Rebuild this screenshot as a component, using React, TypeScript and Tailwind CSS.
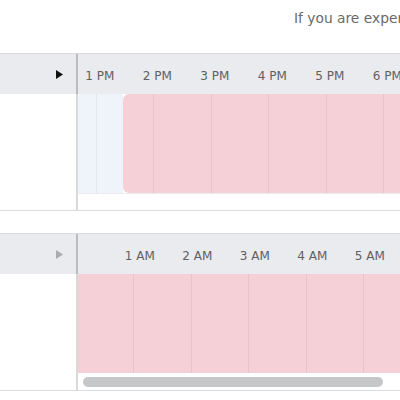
import React from "react";

const PANEL_FONT = "font-['DejaVu_Sans','Liberation_Sans',sans-serif]";

function Triangle({ color }: { color: string }) {
  return (
    <svg width="7" height="9" viewBox="0 0 7 9" className="block">
      <polygon points="0,0 7,4.5 0,9" fill={color} />
    </svg>
  );
}

function HeaderLabels({ labels, offsetClass }: { labels: string[]; offsetClass: string }) {
  return (
    <div className={`flex h-full items-center pt-[3px] whitespace-nowrap ${offsetClass}`}>
      {labels.map((l) => (
        <div key={l} className="w-[57.5px] shrink-0 text-center text-[12px] text-[#5f6062]">
          {l}
        </div>
      ))}
    </div>
  );
}

function PinkColumns({ first, count }: { first: number; count: number }) {
  return (
    <div className="flex h-full">
      <div className="shrink-0 h-full" style={{ width: first }} />
      {Array.from({ length: count }).map((_, i) => (
        <div key={i} className="w-[57.5px] shrink-0 h-full border-l border-[#ecc2c9]" />
      ))}
    </div>
  );
}

export default function App() {
  return (
    <div className={`w-[400px] h-[400px] bg-white overflow-hidden ${PANEL_FONT}`}>
      <div className="h-[53px] pl-[294px] pt-[8px] whitespace-nowrap overflow-hidden text-[13.8px] text-[#6a6a6a]">
        If you are experiencing problems with your schedule
      </div>

      {/* Panel 1 */}
      <div className="border-t border-b border-[#d9dbde] flex">
        <div className="w-[76px] shrink-0 flex flex-col">
          <div className="h-[40px] bg-[#e9ebee] flex items-center justify-end pr-[13px] pt-[1px]">
            <Triangle color="#111111" />
          </div>
          <div className="h-[99px] bg-white" />
          <div className="h-[17px] bg-white" />
        </div>
        <div className="w-[2px] shrink-0 flex flex-col">
          <div className="h-[40px] bg-[#b9bbbe]" />
          <div className="flex-1 bg-[#d9d9d9]" />
        </div>
        <div className="flex-1 overflow-hidden flex flex-col">
          <div className="h-[40px] bg-[#e9ebee] overflow-hidden">
            <HeaderLabels
              labels={["1 PM", "2 PM", "3 PM", "4 PM", "5 PM", "6 PM", "7 PM"]}
              offsetClass="ml-[-7px]"
            />
          </div>
          <div className="h-[99px] flex overflow-hidden">
            <div className="w-[45px] shrink-0 h-full bg-[#eef4f9] flex">
              <div className="w-[18px] shrink-0 h-full" />
              <div className="h-full border-l border-[#dfe7ef]" />
            </div>
            <div className="flex-1 h-full bg-[#f5d1d7] rounded-l-[6px] overflow-hidden">
              <PinkColumns first={30} count={6} />
            </div>
          </div>
          <div className="h-[17px] bg-white border-t border-[#ececec]" />
        </div>
      </div>

      <div className="h-[22px]" />

      {/* Panel 2 */}
      <div className="border-t border-b border-[#d9dbde] flex">
        <div className="w-[76px] shrink-0 flex flex-col">
          <div className="h-[40px] bg-[#e9ebee] flex items-center justify-end pr-[13px] pt-[1px]">
            <Triangle color="#a9abae" />
          </div>
          <div className="h-[99px] bg-white" />
          <div className="h-[17px] bg-white" />
        </div>
        <div className="w-[2px] shrink-0 flex flex-col">
          <div className="h-[40px] bg-[#b9bbbe]" />
          <div className="flex-1 bg-[#d9d9d9]" />
        </div>
        <div className="flex-1 overflow-hidden flex flex-col">
          <div className="h-[40px] bg-[#e9ebee] overflow-hidden">
            <HeaderLabels
              labels={["1 AM", "2 AM", "3 AM", "4 AM", "5 AM", "6 AM"]}
              offsetClass="ml-[33px]"
            />
          </div>
          <div className="h-[99px] bg-[#f5d1d7] overflow-hidden">
            <PinkColumns first={55} count={6} />
          </div>
          <div className="h-[17px] bg-white pt-[4px] pl-[5px]">
            <div className="h-[10px] w-[300px] rounded-full bg-[#c6c7c8]" />
          </div>
        </div>
      </div>
    </div>
  );
}
